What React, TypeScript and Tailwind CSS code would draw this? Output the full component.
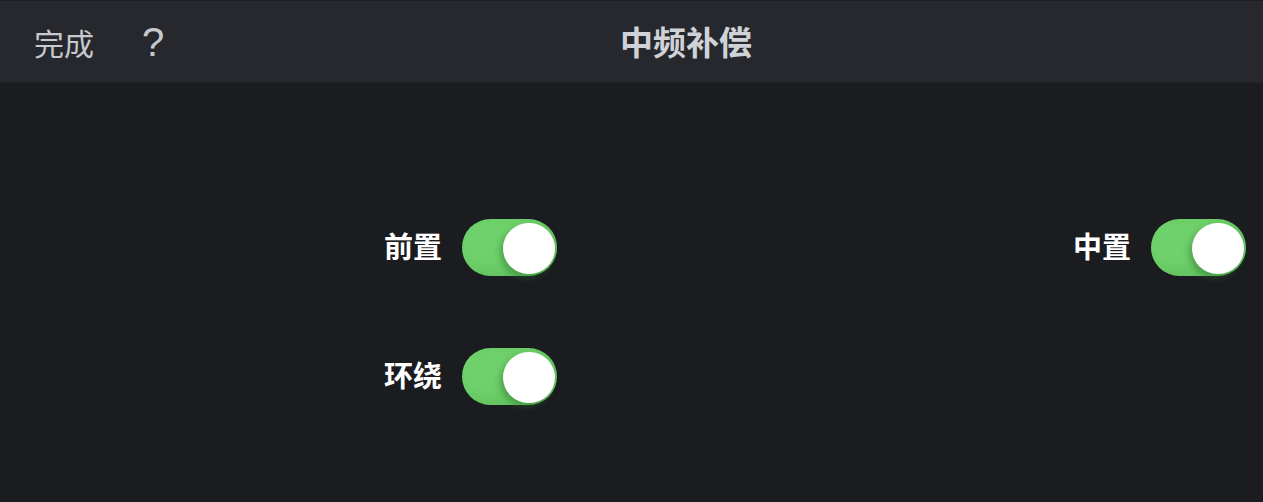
const font = "font-['Noto_Sans_CJK_SC','Noto_Sans',sans-serif]";

function Toggle() {
  return (
    <div className="relative h-[57px] w-[95px] rounded-full bg-[#6fd16b] shadow-[inset_-10px_-6px_14px_rgba(60,150,60,0.25)]">
      <div className="absolute right-[2px] top-[4px] h-[51px] w-[52px] rounded-full bg-white shadow-[-3px_4px_6px_rgba(40,110,40,0.45)]" />
    </div>
  );
}

function Row({ label }: { label: string }) {
  return (
    <div className="flex items-center gap-5">
      <span className="mb-[5px] text-[29px] font-semibold leading-none text-white">{label}</span>
      <Toggle />
    </div>
  );
}

export default function App() {
  return (
    <div className={`flex h-[502px] w-[1263px] flex-col bg-[#1b1c20] ${font}`}>
      <header className="flex h-[83px] items-center border-t border-b border-t-[#1c1d21] border-b-[#1f2024] bg-[#27282d]">
        <div className="flex w-[620px] items-center gap-[48px] pl-[34px] text-[#c6c9ce]">
          <span className="text-[30px] leading-none">完成</span>
          <span className="text-[40px] leading-none font-['Liberation_Sans',sans-serif]">?</span>
        </div>
        <h1 className="text-[33px] font-bold leading-none text-[#cfd2d7]">中频补偿</h1>
      </header>
      <main className="flex items-start pt-[136px]">
        <div className="flex w-[557px] flex-col items-end gap-[72px]">
          <Row label="前置" />
          <Row label="环绕" />
        </div>
        <div className="flex flex-1 justify-end pr-[17px]">
          <Row label="中置" />
        </div>
      </main>
    </div>
  );
}
